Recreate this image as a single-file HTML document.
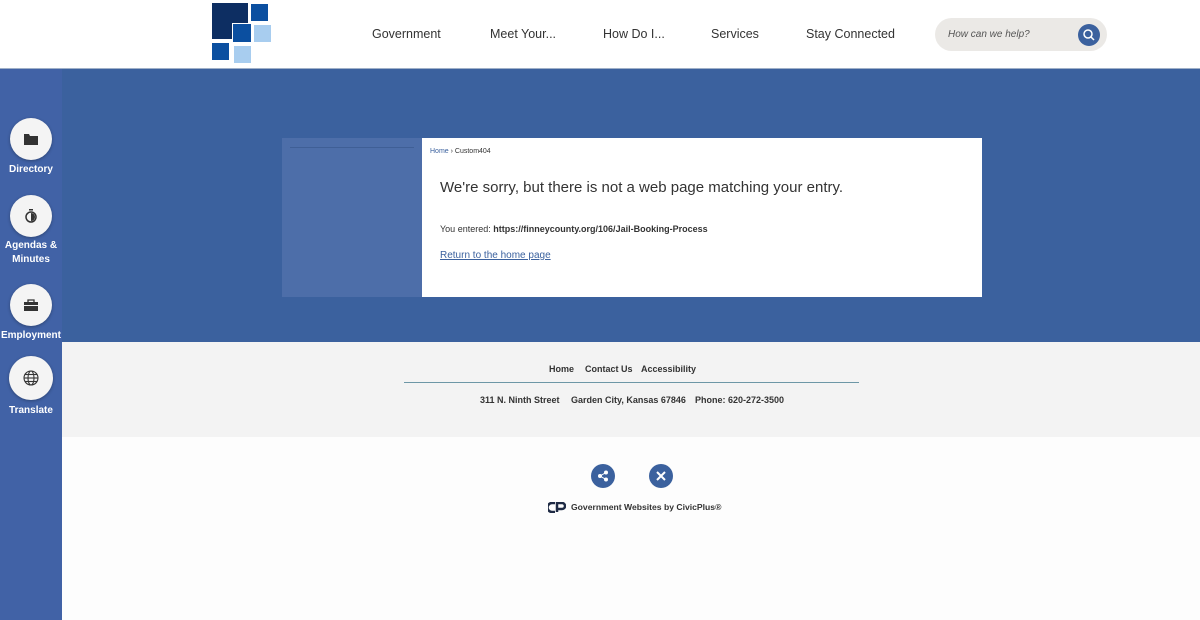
<!DOCTYPE html>
<html><head><style>
*{margin:0;padding:0;box-sizing:border-box}
body{width:1200px;height:620px;overflow:hidden;background:#fdfdfd;font-family:"Liberation Sans",sans-serif;position:relative}
.hdr{position:absolute;left:0;top:0;width:1200px;height:69px;background:#fff;border-bottom:1px solid #9fb0c8}
.nav{position:absolute;top:27px;font-size:12.5px;color:#333}
.band{position:absolute;left:0;top:69px;width:1200px;height:273px;background:#3b619e}
.side{position:absolute;left:0;top:69px;width:62px;height:551px;background:#4162a6}
.sb{position:absolute;left:10px;width:42px;height:42px;border-radius:50%;background:#f4f4f4;box-shadow:0 1px 3px rgba(0,0,0,.3);display:flex;align-items:center;justify-content:center}
.sl{position:absolute;left:0;width:62px;text-align:center;color:#fff;font-size:10px;font-weight:bold;line-height:14px}
.foot{position:absolute;left:62px;top:342px;width:1138px;height:95px;background:#f3f3f3}
.f{font-size:9px;font-weight:bold;color:#333;position:absolute}
.circ{position:absolute;width:24px;height:24px;border-radius:50%;background:#3b619e;display:flex;align-items:center;justify-content:center}
</style></head><body>
<div class="hdr">
<div style="position:absolute;left:212px;top:3px;width:36px;height:36px;background:#0d2e62"></div>
<div style="position:absolute;left:251px;top:4px;width:17px;height:17px;background:#0b4fa0"></div>
<div style="position:absolute;left:233px;top:24px;width:18px;height:18px;background:#0b4fa0;border:1px solid #fff;box-sizing:content-box;margin:-1px"></div>
<div style="position:absolute;left:254px;top:25px;width:17px;height:17px;background:#a8cdef"></div>
<div style="position:absolute;left:212px;top:43px;width:17px;height:17px;background:#0b4fa0"></div>
<div style="position:absolute;left:234px;top:46px;width:17px;height:17px;background:#a8cdef"></div>
<div class="nav" style="left:372px">Government</div>
<div class="nav" style="left:490px">Meet Your...</div>
<div class="nav" style="left:603px">How Do I...</div>
<div class="nav" style="left:711px">Services</div>
<div class="nav" style="left:806px">Stay Connected</div>
<div style="position:absolute;left:935px;top:18px;width:172px;height:33px;border-radius:17px;background:#ebe9e6">
<span style="position:absolute;left:13px;top:11px;font-size:10px;font-style:italic;color:#555">How can we help?</span>
<div style="position:absolute;left:143px;top:6px;width:22px;height:22px;border-radius:50%;background:#3b619e"><svg width="22" height="22"><circle cx="10" cy="10" r="4" stroke="#fff" stroke-width="1.5" fill="none"/><line x1="13" y1="13" x2="16" y2="16" stroke="#fff" stroke-width="1.5"/></svg></div>
</div>
</div>
<div class="band"></div>
<div style="position:absolute;left:282px;top:138px;width:140px;height:159px;background:#4d6ea9"><div style="margin:9px 8px 0;border-top:1px solid #3f5f96"></div></div>
<div style="position:absolute;left:422px;top:138px;width:560px;height:159px;background:#fff">
<div style="position:absolute;left:8px;top:10px;font-size:7px;color:#333"><span style="color:#3b619e">Home</span> › Custom404</div>
<div style="position:absolute;left:18px;top:41px;font-size:15px;color:#333">We're sorry, but there is not a web page matching your entry.</div>
<div style="position:absolute;left:18px;top:86px;font-size:9px;color:#333">You entered: <b>https://finneycounty.org/106/Jail-Booking-Process</b></div>
<div style="position:absolute;left:18px;top:112px;font-size:10px;color:#3b619e;text-decoration:underline">Return to the home page</div>
</div>
<div class="side"></div>
<div class="sb" style="top:118px"><svg width="14" height="12"><path d="M0 1h5l1 2h8v9H0z" fill="#333"/></svg></div>
<div class="sl" style="top:163px">Directory</div>
<div class="sb" style="top:195px"><svg width="14" height="16"><circle cx="7" cy="9" r="5" stroke="#333" stroke-width="1.5" fill="none"/><path d="M7 9V5a4 4 0 0 1 0 8z" fill="#333"/><rect x="5" y="1" width="4" height="1.5" fill="#333"/></svg></div>
<div class="sl" style="top:239px">Agendas &amp;<br>Minutes</div>
<div class="sb" style="top:284px"><svg width="14" height="12"><path d="M4 3V1h6v2" stroke="#333" fill="none" stroke-width="1.3"/><rect x="0" y="3" width="14" height="9" fill="#333"/><rect x="0" y="6" width="14" height="1" fill="#f4f4f4"/></svg></div>
<div class="sl" style="top:329px">Employment</div>
<div class="sb" style="top:356px;left:9px;width:44px;height:44px"><svg width="16" height="16"><g stroke="#333" fill="none" stroke-width="1.1"><circle cx="8" cy="8" r="7"/><ellipse cx="8" cy="8" rx="3" ry="7"/><line x1="1" y1="8" x2="15" y2="8"/><line x1="2" y1="4.5" x2="14" y2="4.5"/><line x1="2" y1="11.5" x2="14" y2="11.5"/></g></svg></div>
<div class="sl" style="top:404px">Translate</div>
<div class="foot">
<div class="f" style="left:487px;top:22px">Home</div>
<div class="f" style="left:523px;top:22px">Contact Us</div>
<div class="f" style="left:579px;top:22px">Accessibility</div>
<div style="position:absolute;left:342px;top:40px;width:455px;border-top:1px solid #6d97a6"></div>
<div class="f" style="left:418px;top:53px">311 N. Ninth Street</div>
<div class="f" style="left:509px;top:53px">Garden City, Kansas 67846</div>
<div class="f" style="left:633px;top:53px">Phone: 620-272-3500</div>
</div>
<div class="circ" style="left:591px;top:464px"><svg width="12" height="12"><g fill="#fff"><circle cx="9" cy="2.5" r="2"/><circle cx="3" cy="6" r="2"/><circle cx="9" cy="9.5" r="2"/></g><path d="M9 2.5L3 6l6 3.5" stroke="#fff" fill="none"/></svg></div>
<div class="circ" style="left:649px;top:464px"><svg width="12" height="12"><path d="M2 2l8 8M10 2l-8 8" stroke="#fff" stroke-width="2"/></svg></div>
<svg style="position:absolute;left:548px;top:502px" width="18" height="11"><path d="M7 1H4a4 4 0 0 0 0 9h3M9 10V1h5a3 3 0 0 1 0 6h-5" stroke="#1e2a44" stroke-width="2.5" fill="none"/></svg>
<div class="f" style="left:571px;top:502px;font-size:8.6px">Government Websites by CivicPlus®</div>
</body></html>
